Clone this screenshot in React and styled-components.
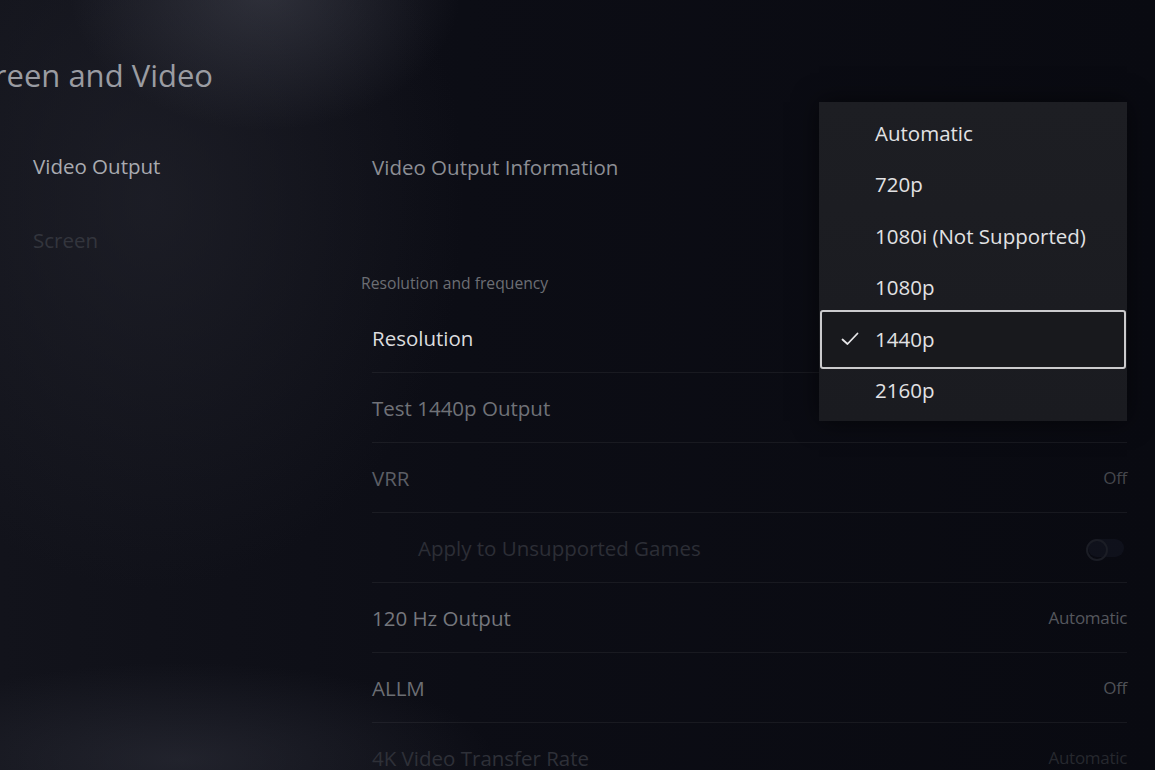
import React from "react";
import styled, { createGlobalStyle } from "styled-components";

const GlobalStyle = createGlobalStyle`
  html, body {
    margin: 0;
    padding: 0;
    background: #0a0b12;
  }
  * {
    box-sizing: border-box;
  }
`;

const Screen = styled.div`
  position: relative;
  width: 1155px;
  height: 770px;
  overflow: hidden;
  font-family: "Open Sans", "Noto Sans", sans-serif;
  background:
    radial-gradient(ellipse 280px 200px at 265px -10px, rgba(80, 82, 94, 0.45), transparent 70%),
    radial-gradient(ellipse 420px 130px at 180px 760px, rgba(60, 62, 74, 0.4), transparent 75%),
    radial-gradient(ellipse 420px 520px at 150px 200px, rgba(34, 35, 44, 0.65), transparent 75%),
    linear-gradient(90deg, #12131b 0%, #0c0d15 40%, #090a11 100%);
`;

const Title = styled.h1`
  margin: 0;
  padding-top: 55px;
  margin-left: -38px;
  font-size: 31px;
  line-height: 40px;
  font-weight: 400;
  color: #9a9ca2;
  white-space: nowrap;
`;

const Body = styled.div`
  display: grid;
  grid-template-columns: 361px 766px;
  padding-top: 34px;
`;

const Nav = styled.nav`
  display: flex;
  flex-direction: column;
  padding-left: 33px;
`;

const NavItem = styled.div`
  height: 74px;
  display: flex;
  align-items: center;
  font-size: 20.5px;
  color: ${({ $dim }) => ($dim ? "#33353d" : "#a9abb1")};
`;

const Main = styled.section`
  position: relative;
  display: flex;
  flex-direction: column;
`;

const InfoRow = styled.div`
  height: 76px;
  padding-left: 11px;
  display: flex;
  align-items: center;
  font-size: 20.5px;
  color: #8c8e94;
`;

const SectionLabel = styled.div`
  margin-top: 68px;
  font-size: 15.7px;
  line-height: 20px;
  color: #6c6e74;
`;

const List = styled.div`
  margin-top: 10px;
  padding-left: 11px;
  display: flex;
  flex-direction: column;
`;

const Row = styled.div`
  height: 70px;
  flex-shrink: 0;
  display: flex;
  align-items: center;
  justify-content: space-between;
  padding-left: ${({ $indent }) => ($indent ? "46px" : "0")};
  border-bottom: 1px solid rgba(255, 255, 255, 0.06);
`;

const Label = styled.span`
  font-size: 20.5px;
  color: ${({ $color }) => $color};
`;

const Value = styled.span`
  font-size: 17px;
  letter-spacing: -0.3px;
  color: ${({ $color }) => $color};
`;

const Toggle = styled.span`
  position: relative;
  width: 36px;
  height: 18px;
  margin-right: 3px;
  border-radius: 9px;
  background: rgba(36, 38, 60, 0.25);

  &::before {
    content: "";
    position: absolute;
    left: -2px;
    top: 0;
    width: 18px;
    height: 18px;
    border-radius: 50%;
    border: 2px solid #1b1d25;
  }
`;

const Menu = styled.div`
  position: absolute;
  top: -27px;
  left: 458px;
  width: 308px;
  padding: 5px 0;
  background: linear-gradient(180deg, #1d1e23 0%, #1a1b20 100%);
  box-shadow: 0 0 24px rgba(0, 0, 0, 0.55);
  display: flex;
  flex-direction: column;
`;

const MenuItem = styled.div`
  position: relative;
  height: 51.5px;
  display: flex;
  align-items: center;
  padding-left: 56px;
  font-size: 20.5px;
  color: #e2e2e4;

  ${({ $selected }) =>
    $selected &&
    `
    &::before {
      content: "";
      position: absolute;
      top: -3px;
      bottom: -4px;
      left: 1px;
      right: 1px;
      border: 2px solid #cbcbcd;
      border-radius: 3px;
      background: #18191d;
    }
  `}
`;

const ItemText = styled.span`
  position: relative;
`;

const Check = styled.svg`
  position: absolute;
  left: 22px;
  top: 50%;
  width: 18px;
  height: 14px;
  margin-top: -7px;
`;

const rows = [
  { label: "Resolution", color: "#dcdcdf" },
  { label: "Test 1440p Output", color: "#707278" },
  { label: "VRR", color: "#5c5e65", value: "Off", valueColor: "#45474d" },
  { label: "Apply to Unsupported Games", color: "#2c2e36", indent: true, toggle: true },
  { label: "120 Hz Output", color: "#75777d", value: "Automatic", valueColor: "#55575d" },
  { label: "ALLM", color: "#6c6e74", value: "Off", valueColor: "#4f5157" },
  { label: "4K Video Transfer Rate", color: "#2e3038", value: "Automatic", valueColor: "#26282e" },
];

const options = ["Automatic", "720p", "1080i (Not Supported)", "1080p", "1440p", "2160p"];

export default function App() {
  return (
    <>
      <GlobalStyle />
      <Screen>
        <Title>Screen and Video</Title>
        <Body>
          <Nav>
            <NavItem>Video Output</NavItem>
            <NavItem $dim>Screen</NavItem>
          </Nav>
          <Main>
            <InfoRow>Video Output Information</InfoRow>
            <SectionLabel>Resolution and frequency</SectionLabel>
            <List>
              {rows.map((r) => (
                <Row key={r.label} $indent={r.indent}>
                  <Label $color={r.color}>{r.label}</Label>
                  {r.value && <Value $color={r.valueColor}>{r.value}</Value>}
                  {r.toggle && <Toggle />}
                </Row>
              ))}
            </List>
            <Menu>
              {options.map((o) => (
                <MenuItem key={o} $selected={o === "1440p"}>
                  {o === "1440p" && (
                    <Check viewBox="0 0 18 14">
                      <polyline
                        points="1.5,7.5 6.5,12 16.5,1.5"
                        fill="none"
                        stroke="#e6e6e8"
                        strokeWidth="1.8"
                        strokeLinecap="round"
                        strokeLinejoin="round"
                      />
                    </Check>
                  )}
                  <ItemText>{o}</ItemText>
                </MenuItem>
              ))}
            </Menu>
          </Main>
        </Body>
      </Screen>
    </>
  );
}
